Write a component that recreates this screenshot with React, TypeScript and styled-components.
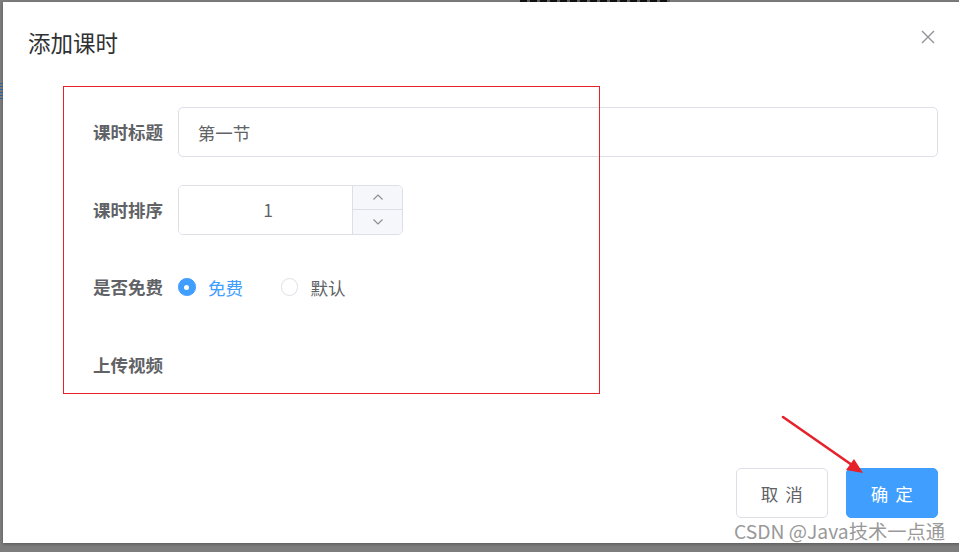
import React from "react";
import styled, { createGlobalStyle } from "styled-components";

const Global = createGlobalStyle`
  html, body { margin: 0; padding: 0; background: #7d7d7d; }
  body { font-family: "Microsoft YaHei", "Noto Sans CJK SC", "Noto Sans", sans-serif; }
  * { box-sizing: border-box; }
`;

const Page = styled.div`
  position: relative;
  width: 959px;
  height: 552px;
  overflow: hidden;
  background: #7d7d7d;
  padding: 2px 0 0 3px;
`;

const BgText = styled.div`
  position: absolute;
  top: -1px;
  left: 520px;
  width: 150px;
  height: 3px;
  background: repeating-linear-gradient(90deg, #111 0 7px, #5a5a5a 7px 10px);
`;

const BgLines = styled.div`
  position: absolute;
  left: 0;
  top: 83px;
  width: 3px;
  height: 16px;
  background: repeating-linear-gradient(180deg, #2e5f9e 0 1px, transparent 1px 3px);
`;

const Dialog = styled.div`
  width: 960px;
  height: 541px;
  background: #fff;
  display: flex;
  flex-direction: column;
  box-shadow: 0 1px 3px rgba(0, 0, 0, 0.3);
`;

const Header = styled.div`
  display: flex;
  justify-content: space-between;
  align-items: flex-start;
  padding: 25px 25px 12.5px;
`;

const Title = styled.span`
  font-size: 22.5px;
  line-height: 30px;
  color: #303133;
`;

const CloseBtn = styled.button`
  width: 20px;
  height: 20px;
  padding: 0;
  margin: 0;
  border: 0;
  background: none;
  display: flex;
  align-items: center;
  justify-content: center;
  cursor: pointer;
`;

const Body = styled.div`
  padding: 37.5px 25px;
`;

const FormItem = styled.div`
  display: flex;
  margin-bottom: 27.5px;
`;

const Label = styled.label`
  width: 150px;
  flex: none;
  padding-right: 15px;
  text-align: right;
  line-height: 50px;
  font-size: 17.5px;
  font-weight: bold;
  color: #606266;
`;

const Content = styled.div`
  flex: 1;
  min-height: 50px;
  display: flex;
  align-items: center;
`;

const TextInput = styled.input`
  width: 100%;
  height: 50px;
  border: 1px solid #dcdfe6;
  border-radius: 5px;
  padding: 0 18.75px;
  font-size: 17.5px;
  color: #606266;
  font-family: inherit;
  outline: none;
`;

const NumberBox = styled.div`
  width: 225px;
  height: 50px;
  border: 1px solid #dcdfe6;
  border-radius: 5px;
  display: flex;
  overflow: hidden;
`;

const NumberValue = styled.input`
  flex: 1;
  min-width: 0;
  border: 0;
  padding: 0 0 0 5px;
  text-align: center;
  font-size: 17.5px;
  color: #606266;
  font-family: inherit;
  outline: none;
`;

const Steppers = styled.div`
  width: 50px;
  flex: none;
  display: flex;
  flex-direction: column;
  border-left: 1px solid #dcdfe6;
  background: #f5f7fa;
`;

const Step = styled.div<{ $top?: boolean }>`
  flex: 1;
  display: flex;
  align-items: center;
  justify-content: center;
  border-bottom: ${(p) => (p.$top ? "1px solid #dcdfe6" : "0")};
`;

const RadioGroup = styled.div`
  display: flex;
  align-items: center;
`;

const Radio = styled.label<{ $checked?: boolean }>`
  display: flex;
  align-items: center;
  margin-right: 37.5px;
  font-size: 17.5px;
  color: ${(p) => (p.$checked ? "#409eff" : "#606266")};
  cursor: pointer;
`;

const RadioDot = styled.span<{ $checked?: boolean }>`
  width: 17.5px;
  height: 17.5px;
  border-radius: 50%;
  border: 1px solid ${(p) => (p.$checked ? "#409eff" : "#dcdfe6")};
  background: ${(p) => (p.$checked ? "#409eff" : "#fff")};
  display: flex;
  align-items: center;
  justify-content: center;
  margin-right: 12.5px;
  &::after {
    content: "";
    width: 5px;
    height: 5px;
    border-radius: 50%;
    background: #fff;
    display: ${(p) => (p.$checked ? "block" : "none")};
  }
`;

const Footer = styled.div`
  display: flex;
  justify-content: flex-end;
  gap: 17.5px;
  padding: 12.5px 25px 25px;
  margin-top: auto;
`;

const Button = styled.button<{ $primary?: boolean }>`
  width: 92.5px;
  height: 50px;
  border-radius: 5px;
  border: 1px solid ${(p) => (p.$primary ? "#409eff" : "#dcdfe6")};
  background: ${(p) => (p.$primary ? "#409eff" : "#fff")};
  color: ${(p) => (p.$primary ? "#fff" : "#606266")};
  font-size: 17.5px;
  font-family: inherit;
  letter-spacing: 7px;
  text-indent: 7px;
  cursor: pointer;
`;

const RedBox = styled.div`
  position: absolute;
  left: 63px;
  top: 86px;
  width: 537px;
  height: 308px;
  border: 1px solid #e6212a;
  pointer-events: none;
`;

const Arrow = styled.svg`
  position: absolute;
  left: 0;
  top: 0;
  pointer-events: none;
`;

const Watermark = styled.div`
  position: absolute;
  left: 734px;
  top: 518px;
  font-size: 19.3px;
  line-height: 26px;
  color: #999;
  text-shadow: 0 0 1px #fff;
  font-family: "Microsoft YaHei", "Noto Sans CJK SC", "Noto Sans", sans-serif;
  white-space: nowrap;
  pointer-events: none;
`;

const Chevron = ({ up }: { up?: boolean }) => (
  <svg width="12" height="8" viewBox="0 0 12 8">
    <path
      d={up ? "M1.5 6.5 L6 2 L10.5 6.5" : "M1.5 1.5 L6 6 L10.5 1.5"}
      fill="none"
      stroke="#8a8c92"
      strokeWidth="1.1"
    />
  </svg>
);

export default function App() {
  return (
    <>
      <Global />
      <Page>
        <BgText />
        <BgLines />
        <Dialog>
          <Header>
            <Title>添加课时</Title>
            <CloseBtn aria-label="close">
              <svg width="14" height="14" viewBox="0 0 14 14">
                <path d="M1 1 L13 13 M13 1 L1 13" stroke="#909399" strokeWidth="1.4" />
              </svg>
            </CloseBtn>
          </Header>
          <Body>
            <FormItem>
              <Label>课时标题</Label>
              <Content>
                <TextInput defaultValue="第一节" />
              </Content>
            </FormItem>
            <FormItem>
              <Label>课时排序</Label>
              <Content>
                <NumberBox>
                  <NumberValue defaultValue="1" />
                  <Steppers>
                    <Step $top>
                      <Chevron up />
                    </Step>
                    <Step>
                      <Chevron />
                    </Step>
                  </Steppers>
                </NumberBox>
              </Content>
            </FormItem>
            <FormItem>
              <Label>是否免费</Label>
              <Content>
                <RadioGroup>
                  <Radio $checked>
                    <RadioDot $checked />
                    免费
                  </Radio>
                  <Radio>
                    <RadioDot />
                    默认
                  </Radio>
                </RadioGroup>
              </Content>
            </FormItem>
            <FormItem>
              <Label>上传视频</Label>
              <Content />
            </FormItem>
          </Body>
          <Footer>
            <Button>取消</Button>
            <Button $primary>确定</Button>
          </Footer>
        </Dialog>
        <RedBox />
        <Arrow width="959" height="552" viewBox="0 0 959 552">
          <line x1="783" y1="417" x2="852" y2="465" stroke="#e6212a" strokeWidth="2.6" strokeLinecap="round" />
          <polygon points="863,473 846,470 854,459" fill="#e6212a" />
        </Arrow>
        <Watermark>CSDN @Java技术一点通</Watermark>
      </Page>
    </>
  );
}
